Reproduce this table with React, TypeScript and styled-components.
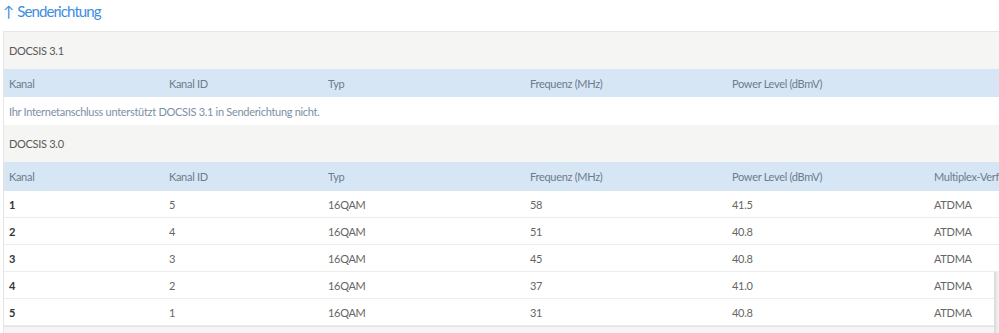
import React from "react";
import styled, { createGlobalStyle } from "styled-components";

const Global = createGlobalStyle`
  html, body { margin: 0; padding: 0; background: #fff; overflow: hidden; }
  body { font-family: "Lato", "Open Sans", sans-serif; width: 999px; height: 333px; }
`;

const Page = styled.div`
  position: relative;
  padding: 1px 0 0 3px;
  width: 1300px;
`;

const Title = styled.h2`
  margin: 0;
  height: 30px;
  font-weight: 400;
  font-size: 15px;
  line-height: 20px;
  color: #3d8de0;
  letter-spacing: -0.9px;
  word-spacing: 1px;
`;

const Panel = styled.div`
  border: 1px solid #e6e6e6;
  border-bottom: none;
  background: #f5f5f3;
  width: 1250px;
  font-size: 11px;
  letter-spacing: -0.3px;
`;

const SectionHead = styled.div`
  height: 37px;
  display: flex;
  align-items: center;
  padding-left: 5px;
  color: #5a5a5a;
  background: #f5f5f3;
`;

const Grid = styled.div`
  display: grid;
  grid-template-columns: 160px 159px 202px 202px 202px 1fr;
  background: #fff;
`;

const HeadCell = styled.div<{ $tall?: boolean }>`
  height: ${(p) => (p.$tall ? 29 : 28)}px;
  display: flex;
  align-items: center;
  padding-left: 5px;
  background: #d6e6f5;
  color: #6d7c8b;
  white-space: nowrap;
`;

const Cell = styled.div<{ $strong?: boolean }>`
  height: 26px;
  display: flex;
  align-items: center;
  padding-left: 5px;
  border-bottom: 1px solid #ececec;
  color: ${(p) => (p.$strong ? "#333" : "#666")};
  font-weight: ${(p) => (p.$strong ? 700 : 400)};
  white-space: nowrap;
`;

const Notice = styled.div`
  grid-column: 1 / -1;
  height: 28px;
  display: flex;
  align-items: center;
  padding-left: 5px;
  color: #7c90a5;
  background: #fff;
`;

const BoxedGrid = styled(Grid)`
  border-left: 1px solid #e3e3e3;
  margin-left: -1px;
`;

const Footer = styled.div`
  height: 10px;
  background: #f5f5f3;
  border-top: 1px solid #e3e3e3;
`;

const Edge = styled.div`
  position: absolute;
  left: 994px;
  top: 272px;
  width: 5px;
  height: 61px;
  background: linear-gradient(to right, #d9d9d9, #f4f4f4);
`;

const headers = ["Kanal", "Kanal ID", "Typ", "Frequenz (MHz)", "Power Level (dBmV)", "Multiplex-Verfahren"];

const rows = [
  ["1", "5", "16QAM", "58", "41.5", "ATDMA"],
  ["2", "4", "16QAM", "51", "40.8", "ATDMA"],
  ["3", "3", "16QAM", "45", "40.8", "ATDMA"],
  ["4", "2", "16QAM", "37", "41.0", "ATDMA"],
  ["5", "1", "16QAM", "31", "40.8", "ATDMA"],
];

export default function App() {
  return (
    <>
      <Global />
      <Page>
        <Title>↑ Senderichtung</Title>
        <Panel>
          <SectionHead>DOCSIS 3.1</SectionHead>
          <Grid>
            {headers.slice(0, 5).map((h) => (
              <HeadCell key={h}>{h}</HeadCell>
            ))}
            <HeadCell />
            <Notice>Ihr Internetanschluss unterstützt DOCSIS 3.1 in Senderichtung nicht.</Notice>
          </Grid>
          <SectionHead>DOCSIS 3.0</SectionHead>
          <BoxedGrid>
            {headers.map((h) => (
              <HeadCell key={h} $tall>
                {h}
              </HeadCell>
            ))}
            {rows.map((r) =>
              r.map((v, i) => (
                <Cell key={r[0] + "-" + i} $strong={i === 0}>
                  {v}
                </Cell>
              ))
            )}
          </BoxedGrid>
          <Footer />
        </Panel>
        <Edge />
      </Page>
    </>
  );
}
